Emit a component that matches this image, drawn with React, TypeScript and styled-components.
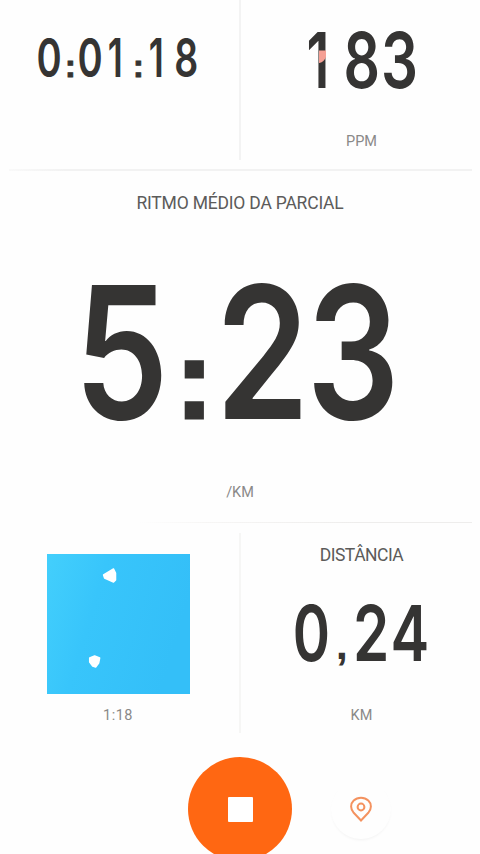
import React from "react";
import styled, { createGlobalStyle } from "styled-components";

const GlobalStyle = createGlobalStyle`
  * { box-sizing: border-box; }
  html, body { margin: 0; background: #fefefe; overflow: hidden; }
`;

const Screen = styled.main`
  width: 480px;
  height: 854px;
  overflow: hidden;
  display: grid;
  grid-template-rows: 169px 2px 351px 1px 219px 1fr;
  background: #fefefe;
  color: #353433;
  font-family: Roboto, "Liberation Sans", sans-serif;
`;

const Rule = styled.div<{ $faded?: boolean }>`
  margin: 0 8px 0 9px;
  background: ${(p) =>
    p.$faded
      ? "linear-gradient(90deg, transparent 28%, #f7f6f5 42%, #eeedec 75%)"
      : "linear-gradient(90deg, #f9f9f9, #f2f2f2 12%)"};
`;

const Split = styled.section`
  display: grid;
  grid-template-columns: 239px 2px 239px;
  min-height: 0;
`;

const Divider = styled.div<{ $lower?: boolean }>`
  background: ${(p) => (p.$lower ? "#f6f6f5" : "#f3f3f3")};
  margin: ${(p) => (p.$lower ? "10px 0 9px" : "0 0 9px")};
`;

const Metric = styled.div<{ $before?: number; $after?: number }>`
  display: flex;
  flex-direction: column;
  align-items: center;
  min-width: 0;
  padding-left: ${(p) => p.$before ?? 0}px;
  padding-right: ${(p) => p.$after ?? 0}px;
`;

const Label = styled.div<{ $gap: number; $spacing?: number }>`
  margin-top: ${(p) => p.$gap}px;
  height: 20px;
  line-height: 20px;
  font-size: 17.5px;
  letter-spacing: ${(p) => p.$spacing ?? -0.2}px;
  white-space: nowrap;
  color: #5c5b5a;
`;

const Unit = styled.div<{ $gap: number; $spacing?: number }>`
  margin-top: ${(p) => p.$gap}px;
  height: 16px;
  line-height: 16px;
  font-size: 14.5px;
  letter-spacing: ${(p) => p.$spacing ?? 0}px;
  white-space: nowrap;
  color: #8a8988;
`;

const Digits = styled.div<{ $gap: number; $height: number; $size: number }>`
  display: flex;
  margin-top: ${(p) => p.$gap}px;
  height: ${(p) => p.$height}px;
  line-height: ${(p) => p.$height}px;
  font-family: Inter, Roboto, sans-serif;
  font-size: ${(p) => p.$size}px;
  font-weight: 600;
`;

const Cell = styled.span<{ $width: number }>`
  position: relative;
  display: flex;
  justify-content: center;
  width: ${(p) => p.$width}px;
  flex: none;
`;

const Digit = styled.span<{ $squeeze: number; $nudge: number }>`
  display: block;
  transform: translateX(${(p) => p.$nudge}em) scaleX(${(p) => p.$squeeze});
`;

const Mark = styled.span<{ $comma: boolean }>`
  display: block;
  font-family: "Liberation Sans", sans-serif;
  font-weight: 700;
  font-size: ${(p) => (p.$comma ? 0.54 : 0.6)}em;
  -webkit-text-stroke: ${(p) => (p.$comma ? 0 : 0.025)}em currentColor;
  transform: translateY(${(p) => (p.$comma ? 0.28 : 0.255)}em) scaleX(1.05);
`;

const HeartTint = styled.svg`
  position: absolute;
  left: 16px;
  top: 19px;
  width: 8px;
  height: 14px;
`;

/* Optical corrections for condensed figures: [offset in em, width factor] */
const optics: Record<string, [number, number]> = {
  "0": [-0.012, 1.02],
  "1": [-0.055, 0.95],
  "2": [-0.01, 1.05],
  "3": [-0.013, 1.02],
  "4": [-0.01, 1.05],
  "5": [-0.019, 1.05],
};

type ReadoutProps = {
  value: string;
  gap: number;
  height: number;
  size: number;
  cell: number;
  mark?: number;
  squeeze: number;
  tinted?: boolean;
};

function Readout({ value, gap, height, size, cell, mark = 0, squeeze, tinted }: ReadoutProps) {
  return (
    <Digits $gap={gap} $height={height} $size={size}>
      {value.split("").map((ch, i) => {
        const isMark = ch === ":" || ch === ",";
        const [nudge, factor] = optics[ch] ?? [0, 1];
        return (
          <Cell key={i} $width={isMark ? mark : cell}>
            {isMark ? (
              <Mark $comma={ch === ","}>{ch}</Mark>
            ) : (
              <Digit $squeeze={squeeze * factor} $nudge={nudge}>{ch}</Digit>
            )}
            {tinted && i === 0 && (
              <HeartTint viewBox="0 0 8 14">
                <path d="M0 0.5H7V7Q5 12 0.5 13H0Z" fill="#f5a095" />
              </HeartTint>
            )}
          </Cell>
        );
      })}
    </Digits>
  );
}

const TrackMap = styled.svg`
  display: block;
  width: 143px;
  height: 140px;
  margin-top: 31px;
`;

const Controls = styled.footer`
  display: grid;
  grid-template-columns: 188px 104px 39px 60px;
  padding-top: 15px;
`;

const StopButton = styled.button`
  grid-column: 2;
  width: 104px;
  height: 104px;
  padding: 0;
  border: 0;
  border-radius: 50%;
  background: #ff6712;
  display: flex;
  align-items: center;
  justify-content: center;
`;

const StopIcon = styled.span`
  width: 25px;
  height: 25px;
  background: #fff;
  border-radius: 1px;
`;

const MapButton = styled.button`
  grid-column: 4;
  width: 60px;
  height: 60px;
  margin-top: 22px;
  padding: 0;
  border: 0;
  border-radius: 50%;
  background: #fefefe;
  box-shadow: 0 2px 3px -1px rgba(0, 0, 0, 0.05);
  display: flex;
  align-items: center;
  justify-content: center;
`;

export default function App() {
  return (
    <>
      <GlobalStyle />
      <Screen>
        <Split>
          <Metric $after={3}>
            <Readout value="0:01:18" gap={29} height={58} size={53.5} cell={27} mark={14} squeeze={0.7} />
          </Metric>
          <Divider />
          <Metric $before={2}>
            <Readout value="183" gap={31} height={58} size={77} cell={39} squeeze={0.74} tinted />
            <Unit $gap={45}>PPM</Unit>
          </Metric>
        </Split>
        <Rule />
        <Metric>
          <Label $gap={22}>RITMO MÉDIO DA PARCIAL</Label>
          <Readout value="5:23" gap={69} height={140} size={184} cell={91} mark={49} squeeze={0.78} />
          <Unit $gap={63}>/KM</Unit>
        </Metric>
        <Rule $faded />
        <Split>
          <Metric $after={3}>
            <TrackMap viewBox="0 0 144 140" preserveAspectRatio="none">
              <defs>
                <linearGradient id="water" x1="0" y1="0" x2="1" y2="0.3">
                  <stop offset="0" stopColor="#43cffc" />
                  <stop offset="0.4" stopColor="#38c5fb" />
                  <stop offset="1" stopColor="#34bff8" />
                </linearGradient>
              </defs>
              <rect width="144" height="140" fill="url(#water)" />
              <path d="M57 21L67 15L69 19V26L67 28L58 24Z" fill="#fff" stroke="#fff" strokeWidth="1.5" strokeLinejoin="round" />
              <path d="M43 104L48 102L53 104L52 109L49 113L46 112L43 108Z" fill="#fff" stroke="#fff" strokeWidth="1.5" strokeLinejoin="round" />
            </TrackMap>
            <Unit $gap={14} $spacing={0.5}>1:18</Unit>
          </Metric>
          <Divider $lower />
          <Metric $before={2}>
            <Label $gap={22} $spacing={-0.5}>DISTÂNCIA</Label>
            <Readout value="0,24" gap={39} height={58} size={77} cell={39} mark={20} squeeze={0.72} />
            <Unit $gap={46}>KM</Unit>
          </Metric>
        </Split>
        <Controls>
          <StopButton aria-label="Parar">
            <StopIcon />
          </StopButton>
          <MapButton aria-label="Mapa">
            <svg width="24" height="28" viewBox="0 0 24 28" fill="none" stroke="#f4925f" strokeWidth="2">
              <path d="M12 25.5L4.7 17.8C1.3 14 1.2 8.9 4.7 5.6C8.7 1.9 15.3 1.9 19.3 5.6C22.8 8.9 22.7 14 19.3 17.8Z" />
              <circle cx="12" cy="12" r="3.4" />
            </svg>
          </MapButton>
        </Controls>
      </Screen>
    </>
  );
}
